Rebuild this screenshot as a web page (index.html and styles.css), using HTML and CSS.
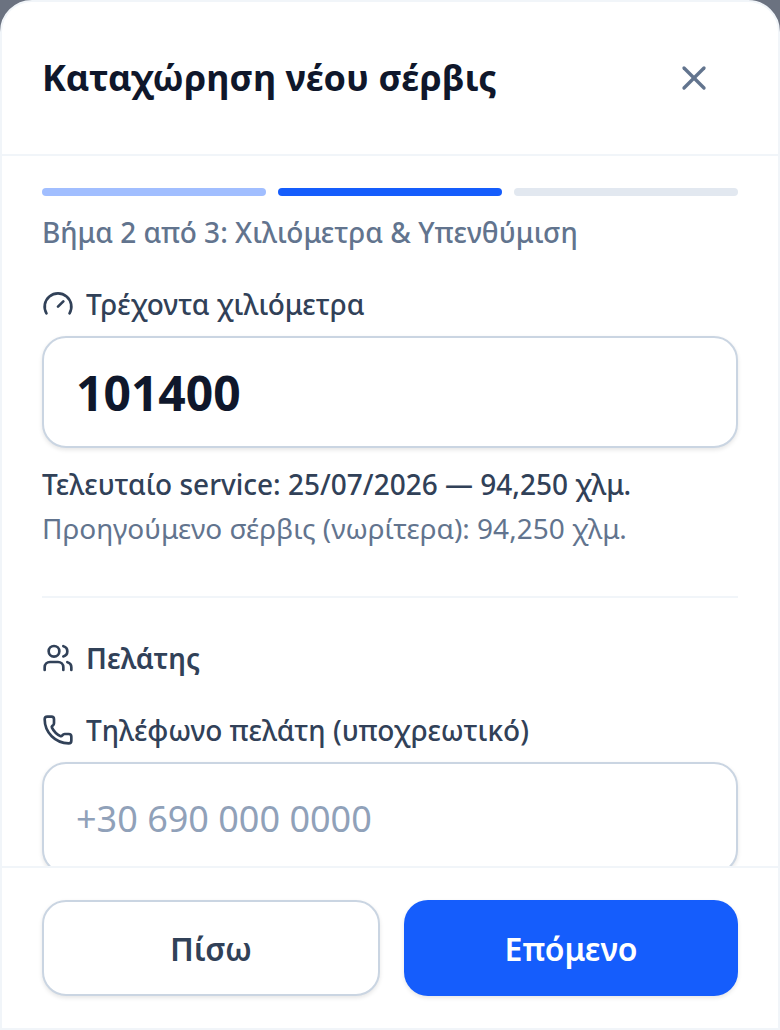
FILE: index.html
```html
<!DOCTYPE html>
<html lang="el">
<head>
    <meta charset="UTF-8">
    <meta name="viewport" content="width=device-width, initial-scale=1.0">
    <title>Καταχώρηση νέου σέρβις</title>
    <link rel="stylesheet" href="styles.css">
</head>
<body>
    <div class="modal" role="dialog" aria-labelledby="modal-title">
        <div class="modal-header">
            <h2 id="modal-title" class="modal-title">Καταχώρηση νέου σέρβις</h2>
            <button type="button" class="close-btn" aria-label="Κλείσιμο">
                <svg class="icon" viewBox="0 0 24 24"><path d="M18 6 6 18"/><path d="m6 6 12 12"/></svg>
            </button>
        </div>

        <form id="service-form" class="modal-body">
            <!-- Βήματα -->
            <div class="steps">
                <span class="step done"></span>
                <span class="step active"></span>
                <span class="step"></span>
            </div>
            <p class="step-text">Βήμα 2 από 3: Χιλιόμετρα &amp; Υπενθύμιση</p>

            <div class="field">
                <label for="km" class="label">
                    <svg class="icon" viewBox="0 0 24 24"><path d="m12 14 4-4"/><path d="M3.34 19a10 10 0 1 1 17.32 0"/></svg>
                    Τρέχοντα χιλιόμετρα
                </label>
                <input type="text" inputmode="numeric" id="km" name="km" class="input input-km" value="101400">
            </div>
            <div class="history">
                <p class="last">Τελευταίο service: 25/07/2026 — 94,250 χλμ.</p>
                <p>Προηγούμενο σέρβις (νωρίτερα): 94,250 χλμ.</p>
            </div>

            <!-- Πελάτης -->
            <div class="section">
                <h3 class="label section-title">
                    <svg class="icon" viewBox="0 0 24 24"><path d="M16 21v-2a4 4 0 0 0-4-4H6a4 4 0 0 0-4 4v2"/><path d="M16 3.128a4 4 0 0 1 0 7.744"/><path d="M22 21v-2a4 4 0 0 0-3-3.87"/><circle cx="9" cy="7" r="4"/></svg>
                    Πελάτης
                </h3>
                <div class="field">
                    <label for="phone" class="label">
                        <svg class="icon" viewBox="0 0 24 24"><path d="M13.832 16.568a1 1 0 0 0 1.213-.303l.355-.465A2 2 0 0 1 17 15h3a2 2 0 0 1 2 2v3a2 2 0 0 1-2 2A18 18 0 0 1 2 4a2 2 0 0 1 2-2h3a2 2 0 0 1 2 2v3a2 2 0 0 1-.8 1.6l-.468.351a1 1 0 0 0-.292 1.233 14 14 0 0 0 6.392 6.384"/></svg>
                        Τηλέφωνο πελάτη (υποχρεωτικό)
                    </label>
                    <input type="tel" id="phone" name="phone" class="input" placeholder="+30 690 000 0000" required>
                </div>
            </div>
        </form>

        <div class="modal-footer">
            <button type="button" class="button back-btn">Πίσω</button>
            <button type="submit" class="button next-btn" form="service-form">Επόμενο</button>
        </div>
    </div>
</body>
</html>
```

FILE: styles.css
```css
/* Βασικά */
* { box-sizing: border-box; }
body { margin: 0; background-color: #6b7280; color: #0f172b; font-family: "Noto Sans", "Open Sans", sans-serif; font-size: 28px; line-height: 40px; }
h2, h3, p { margin: 0; }
button, input { font-family: inherit; }
.icon { width: 32px; height: 32px; flex-shrink: 0; fill: none; stroke: currentColor; stroke-width: 2; stroke-linecap: round; stroke-linejoin: round; }

/* Παράθυρο */
.modal { display: flex; flex-direction: column; height: 100vh; background-color: #fff; border: 2px solid #f1f5f9; border-radius: 32px 32px 0 0; overflow: hidden; }
.modal-header { display: flex; justify-content: space-between; align-items: center; padding: 32px 40px; border-bottom: 2px solid #f1f5f9; }
.modal-title { font-size: 36px; line-height: 58px; font-weight: 700; }
.close-btn { display: flex; align-items: center; justify-content: center; width: 88px; height: 88px; padding: 0; border: none; border-radius: 24px; background: none; color: #62748e; cursor: pointer; }
.close-btn .icon { width: 40px; height: 40px; }
.close-btn:hover { background-color: #f1f5f9; }
.modal-body { flex: 1; min-height: 0; overflow-y: auto; scrollbar-width: none; padding: 32px 40px; }

/* Βήματα */
.steps { display: flex; gap: 12px; margin-bottom: 16px; }
.step { flex: 1; height: 8px; border-radius: 4px; background-color: #e2e8f0; }
.step.done { background-color: #a1beff; }
.step.active { background-color: #155dfc; }
.step-text { color: #62748e; font-weight: 500; margin-bottom: 32px; }

/* Πεδία */
.label { display: flex; align-items: center; gap: 12px; color: #314158; font-size: 28px; font-weight: 500; margin-bottom: 12px; }
.input { display: block; width: 100%; height: 112px; padding: 0 32px; border: 2px solid #cad5e2; border-radius: 24px; background-color: #fff; color: #0f172b; font-size: 36px; box-shadow: 0 2px 4px rgba(0,0,0,0.1); }
.input-km { font-size: 48px; font-weight: 700; }
.input::placeholder { color: #90a1b9; opacity: 1; }
.input:focus { border-color: #155dfc; outline: 0; }
.history { display: grid; gap: 4px; margin-top: 16px; color: #62748e; }
.history .last { color: #314158; font-weight: 500; }
.section { margin-top: 48px; padding-top: 40px; border-top: 2px solid #f1f5f9; }
.section-title { font-weight: 600; margin-bottom: 32px; }

/* Κουμπιά */
.modal-footer { display: flex; gap: 24px; padding: 32px 40px; border-top: 2px solid #f1f5f9; }
.button { flex: 1; height: 96px; padding: 0 32px; border: none; border-radius: 24px; font-size: 32px; font-weight: 600; cursor: pointer; box-shadow: 0 2px 4px rgba(0,0,0,0.1); }
.back-btn { border: 2px solid #cad5e2; background-color: #fff; color: #314158; }
.back-btn:hover { background-color: #f8fafc; }
.next-btn { background-color: #155dfc; color: #fff; }
.next-btn:hover { background-color: #1447e6; }
```
